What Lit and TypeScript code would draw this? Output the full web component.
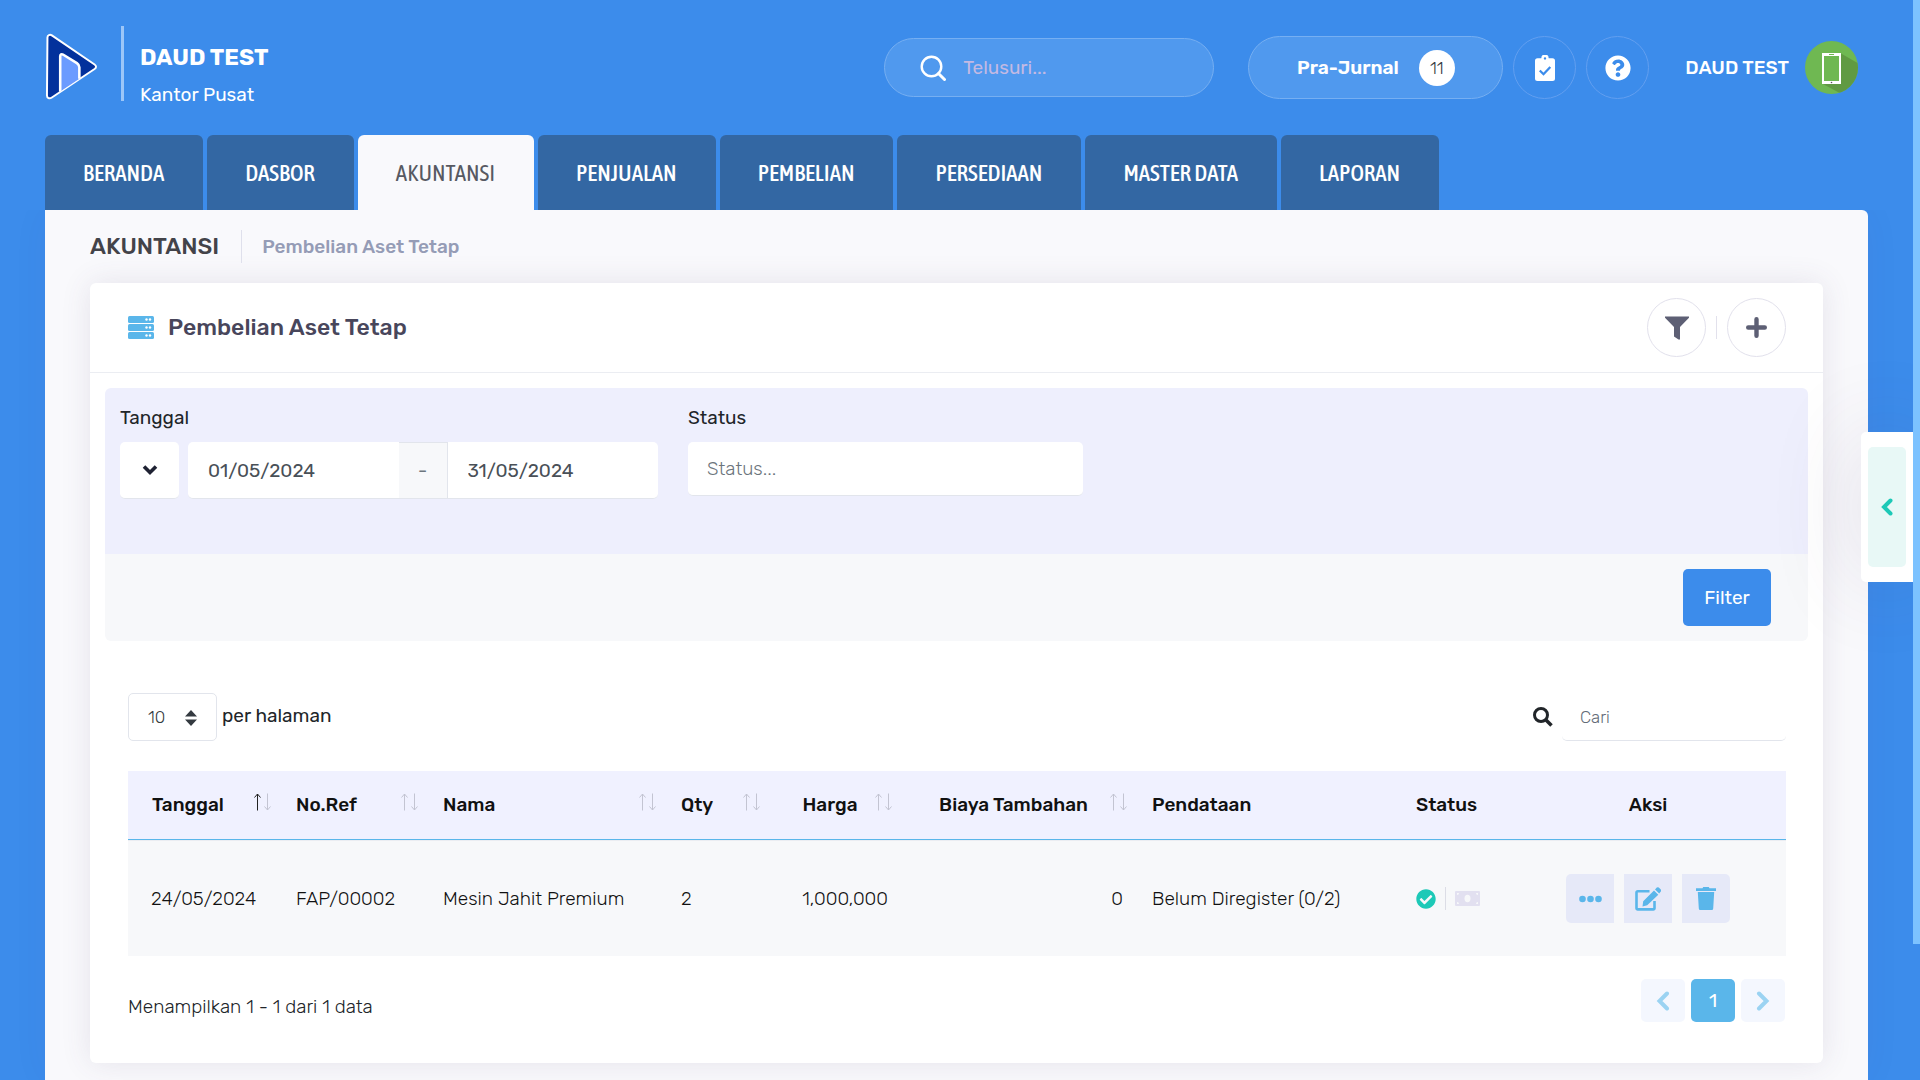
import { LitElement, html, svg, css } from "lit";
import { customElement, state } from "lit/decorators.js";
import { classMap } from "lit/directives/class-map.js";

const logo = html`<svg class="logo" width="53" height="67" viewBox="0 0 54 68" aria-hidden="true">
  <path d="M2.5 4.5C2.5 2 5 1 7 2.3L50.5 32c2 1.400 2 3.200 0 4.600L7 65.600c-2.500 1.600-5 .6-5-2z" fill="#03319c" stroke="#fff" stroke-width="2" stroke-linejoin="round"/>
  <path d="M15.500 59.500V23.500c0-1.700 1.400-2.500 2.800-1.700L32.500 30.500c1.800 1.200 2.500 2.400 2.500 4.300V46.500z" fill="#6b9bff"/>
  <path d="M15.500 59.500V23.500c0-1.700 1.400-2.500 2.800-1.700L32.500 30.500c1.800 1.200 2.500 2.400 2.500 4.300V46.500" fill="none" stroke="#fff" stroke-width="2.600"/>
</svg>`;

const searchThin = html`<svg width="26" height="26" viewBox="0 0 26 26" fill="none" stroke="#fff" aria-hidden="true">
  <circle cx="11.500" cy="11.500" r="9.800" stroke-width="2.400"/><path d="M18.500 18.500l6 6" stroke-width="3" stroke-linecap="round"/>
</svg>`;

const searchBold = html`<svg width="20" height="20" viewBox="0 0 20 20" fill="none" stroke="#212529" stroke-width="3" aria-hidden="true">
  <circle cx="8" cy="8" r="6.500"/><path d="M13 13l5.500 5.500" stroke-width="3.600"/>
</svg>`;

const clipboard = html`<svg width="20" height="26" viewBox="0 0 20 26" aria-hidden="true">
  <path fill="#fff" fill-rule="evenodd" d="M2.500 3.200H6.300a3.700 3.700 0 0 1 7.400 0h3.800A2.500 2.500 0 0 1 20 5.700v17.800a2.500 2.500 0 0 1-2.500 2.500h-15A2.500 2.500 0 0 1 0 23.500V5.700a2.500 2.500 0 0 1 2.500-2.500zM10 2.200a1.200 1.200 0 1 0 0 2.400 1.200 1.200 0 0 0 0-2.400z"/>
  <path d="M4.800 15.500l3.700 3.700 6.800-7.200" fill="none" stroke="#3c8ceb" stroke-width="2.300"/>
</svg>`;

const question = html`<svg width="26" height="26" viewBox="0 0 512 512" fill="#fff" aria-hidden="true"><path d="M504 256c0 136.997-111.043 248-248 248S8 392.997 8 256C8 119.083 119.043 8 256 8s248 111.083 248 248zM262.655 90c-54.497 0-89.255 22.957-116.549 63.758-3.536 5.286-2.353 12.415 2.715 16.258l34.699 26.310c5.205 3.947 12.621 3.008 16.665-2.122 17.864-22.658 30.113-35.797 57.303-35.797 20.429 0 45.698 13.148 45.698 32.958 0 14.976-12.363 22.667-32.534 33.976C247.128 238.528 216 254.941 216 296v4c0 6.627 5.373 12 12 12h56c6.627 0 12-5.373 12-12v-1.333c0-28.462 83.186-29.647 83.186-106.667 0-58.002-60.165-102-116.531-102zM256 338c-25.365 0-46 20.635-46 46 0 25.364 20.635 46 46 46s46-20.636 46-46c0-25.365-20.635-46-46-46z"/></svg>`;

const avatar = html`<svg width="53" height="53" viewBox="0 0 53 53" aria-hidden="true">
  <defs><clipPath id="round"><circle cx="26.500" cy="26.500" r="26.500"/></clipPath></defs>
  <g clip-path="url(#round)">
    <rect width="53" height="53" fill="#6fb852"/>
    <path d="M36 12.500L58 25v32H44L18 43z" fill="#609a42"/>
    <rect x="17" y="12" width="19" height="31" fill="#fff"/>
    <rect x="19" y="15" width="15" height="25" fill="#6fb852"/>
    <rect x="24" y="13" width="5" height="1" fill="#6fb852"/>
    <circle cx="26.500" cy="41.500" r=".8" fill="#555"/>
  </g>
</svg>`;

const server = html`<svg width="26" height="23" viewBox="0 0 26 23" aria-hidden="true">
  ${[0, 8, 16].map(y => svg`<rect x="0" y=${y} width="26" height="7" rx="1.500" fill="#5ab6ea"/><circle cx="18.500" cy=${y + 3.5} r="1.200" fill="#fff"/><circle cx="22" cy=${y + 3.5} r="1.200" fill="#fff"/>`)}
</svg>`;

const funnel = html`<svg width="24" height="24" viewBox="0 0 24 24" aria-hidden="true"><path fill="#5d5f74" d="M0 .5h24v1.200L15 11v12.500h-1.500L9 20.500V11L0 1.700z"/></svg>`;
const plus = html`<svg width="21" height="21" viewBox="0 0 21 21" aria-hidden="true"><path stroke="#5d5f74" stroke-width="4.400" stroke-linecap="round" d="M10.500 2.200v16.600M2.200 10.500h16.600"/></svg>`;
const chevDown = html`<svg width="16" height="12" viewBox="0 0 16 12" aria-hidden="true"><path d="M2 2.500l6 6 6-6" fill="none" stroke="#1f2233" stroke-width="3.600"/></svg>`;
const chevLeft = html`<svg width="12" height="18" viewBox="0 0 12 18" aria-hidden="true"><path d="M9.500 2.500L3 9l6.500 6.500" fill="none" stroke="#1dc9b7" stroke-width="4" stroke-linecap="round"/></svg>`;
const pageLeft = html`<svg width="14" height="20" viewBox="0 0 14 20" aria-hidden="true"><path d="M11 2.500L3.500 10l7.500 7.500" fill="none" stroke="#9bd3f2" stroke-width="4" stroke-linecap="round"/></svg>`;
const pageRight = html`<svg width="14" height="20" viewBox="0 0 14 20" aria-hidden="true"><path d="M3 2.500l7.500 7.500-7.500 7.500" fill="none" stroke="#9bd3f2" stroke-width="4" stroke-linecap="round"/></svg>`;
const updown = html`<svg class="updown" width="12" height="16" viewBox="0 0 12 16" fill="#343a40" aria-hidden="true"><path d="M6 0l6 6.500H0zM6 16L0 9.500h12z"/></svg>`;
const check = html`<svg width="20" height="20" viewBox="0 0 512 512" role="img" aria-label="Disetujui"><path fill="#1dc9b7" d="M504 256c0 136.967-111.033 248-248 248S8 392.967 8 256 119.033 8 256 8s248 111.033 248 248zM227.314 387.314l184-184c6.248-6.248 6.248-16.379 0-22.627l-22.627-22.627c-6.248-6.249-16.379-6.249-22.628 0L216 308.118l-70.059-70.059c-6.248-6.248-16.379-6.248-22.628 0l-22.627 22.627c-6.248 6.248-6.248 16.379 0 22.627l104 104c6.249 6.249 16.379 6.249 22.628.001z"/></svg>`;
const money = html`<svg width="25" height="15" viewBox="0 0 25 15" role="img" aria-label="Pembayaran"><rect width="25" height="15" rx="1" fill="#e2e0f0"/><ellipse cx="12.500" cy="7.500" rx="3" ry="3.700" fill="#f7f8fa"/><path fill="#f7f8fa" d="M2 2h2a2 2 0 0 1-2 2zM23 2v2a2 2 0 0 1-2-2zM2 13v-2a2 2 0 0 1 2 2zM23 13h-2a2 2 0 0 1 2-2z"/></svg>`;
const dots = html`<svg width="23" height="8" viewBox="0 0 23 8" fill="#5ab6ea" aria-hidden="true"><circle cx="3.500" cy="4" r="3.300"/><circle cx="11.500" cy="4" r="3.300"/><circle cx="19.500" cy="4" r="3.300"/></svg>`;
const edit = html`<svg width="26" height="24" viewBox="0 0 26 24" aria-hidden="true">
  <path d="M14.500 4.200H2.700a1.200 1.200 0 0 0-1.200 1.200v15.800a1.200 1.200 0 0 0 1.200 1.200h15.600a1.200 1.200 0 0 0 1.200-1.200V14" fill="none" stroke="#5ab6ea" stroke-width="2.600"/>
  <path d="M19 3.400l4.300 4.300L12.200 18.300 7.500 19.500l.7-5.200zM20 2.400l1.800-1.800a1.500 1.500 0 0 1 2 0l2 2a1.500 1.500 0 0 1 0 2L24.200 6.500z" fill="#5ab6ea"/>
</svg>`;
const trash = html`<svg width="20" height="23" viewBox="0 0 20 23" fill="#5ab6ea" aria-hidden="true"><path d="M6.500 1.200L7.200 0h5.600l.7 1.200H20V4H0V1.200zM1.800 5h16.400l-1 16.500a1.500 1.500 0 0 1-1.500 1.500H4.300a1.500 1.500 0 0 1-1.500-1.500z"/></svg>`;

const sortIcon = (active: boolean) => html`<svg width="17" height="18" viewBox="0 0 17 18" fill="none" aria-hidden="true">
  <g stroke=${active ? "#222" : "#c3c4d2"}><path d="M3.500 17.500V1"/><path d="M.5 4.500l3-3.500 3 3.500"/></g>
  <g stroke="#c3c4d2"><path d="M13.500 .5V17"/><path d="M10.500 13.500l3 3.500 3-3.500"/></g>
</svg>`;

const tabs = ["BERANDA", "DASBOR", "AKUNTANSI", "PENJUALAN", "PEMBELIAN", "PERSEDIAAN", "MASTER DATA", "LAPORAN"];

const columns = [
  { name: "Tanggal", cls: "first", sort: true },
  { name: "No.Ref", cls: "", sort: true },
  { name: "Nama", cls: "", sort: true },
  { name: "Qty", cls: "", sort: true },
  { name: "Harga", cls: "mid", sort: true },
  { name: "Biaya Tambahan", cls: "mid", sort: true },
  { name: "Pendataan", cls: "", sort: false },
  { name: "Status", cls: "", sort: false },
  { name: "Aksi", cls: "center", sort: false },
];

const rows = [
  { date: "24/05/2024", ref: "FAP/00002", name: "Mesin Jahit Premium", qty: "2", price: "1,000,000", extra: "0", reg: "Belum Diregister (0/2)" },
];

@customElement("app-root")
export class AppRoot extends LitElement {
  @state() private active = "AKUNTANSI";

  static styles = css`
    :host {
      display: grid;
      grid-template-columns: minmax(0, 1fr) 7px;
      min-height: 100vh;
      position: relative;
      background: #3c8ceb;
      font-family: Rubik, Roboto, sans-serif;
      font-size: 19px;
      line-height: 29px;
      color: #212529;
    }
    * { box-sizing: border-box; }
    button, input, select { font: inherit; color: inherit; margin: 0; border: 0; }
    button { cursor: pointer; padding: 0; display: flex; align-items: center; justify-content: center; }
    svg { display: block; flex: none; }
    a { text-decoration: none; color: inherit; }
    h1, h2, p { margin: 0; font-weight: 500; }

    .page { display: flex; flex-direction: column; min-width: 0; }
    .rail-thumb { height: 87.4vh; background: #7cc2ff; }

    .top { height: 135px; display: flex; align-items: center; padding: 0 55px 0 45px; color: #fff; }
    .brand { display: flex; align-items: center; margin-right: auto; }
    .logo { margin-bottom: 3px; }
    .rule { width: 3px; height: 75px; margin: 0 16px 8px 23px; background: #9cc6f8; }
    .brand-text { padding-top: 17px; line-height: 37px; }
    .brand-text h1 { font-size: 23px; font-weight: 700; }
    .search { width: 330px; height: 59px; border: 1px solid #76aff2; border-radius: 30px; background: #5099ee; display: flex; align-items: center; gap: 17px; padding: 0 35px; }
    .search input { flex: 1; min-width: 0; background: none; padding: 0; outline: 0; }
    .search input::placeholder { color: #c3b9e3; opacity: 1; }
    .journal { height: 63px; width: 255px; margin-left: 34px; border: 1px solid #76aff2; border-radius: 32px; background: #5099ee; gap: 20px; font-weight: 600; }
    .badge { width: 36px; height: 36px; border-radius: 50%; background: #fff; color: #343a40; font-size: 17px; font-weight: 300; line-height: 36px; }
    .round { width: 63px; height: 63px; border-radius: 50%; border: 1px solid #629ff0; background: none; margin-left: 10px; }
    .user { display: flex; align-items: center; gap: 16px; margin-left: 36px; font-weight: 500; background: none; }

    .tabs { display: flex; gap: 4px; padding: 0 45px; font-family: "Asap Condensed", "Roboto Condensed", sans-serif; font-size: 23px; }
    .tab { height: 75px; padding: 2px 39px 0 38px; display: flex; align-items: center; background: #3367a3; color: #fff; border-radius: 6px 6px 0 0; font-weight: 500; }
    .tab.on { background: #f9f9fc; color: #575962; font-weight: 400; }

    .panel { flex: 1; margin: 0 45px; padding: 0 45px 17px; background: #f9f9fc; border-radius: 0 6px 0 0; box-shadow: 0 0 40px rgba(82, 63, 105, 0.04); clip-path: inset(0 -45px 0 -45px); }
    .crumbs { height: 73px; display: flex; align-items: center; }
    .crumbs h1 { font-size: 23px; color: #434349; }
    .crumbs a { font-weight: 500; color: #959cb6; }
    .crumb-rule { width: 1px; height: 33px; background: #dfe0ec; margin: 0 20px 0 22px; }

    .card { background: #fff; border-radius: 6px; box-shadow: 0 0 30px rgba(82, 63, 105, 0.12); }
    .card-head { height: 90px; padding: 0 37px 0 38px; border-bottom: 1px solid #ebedf2; display: flex; align-items: center; gap: 14px; }
    .card-head h2 { font-size: 23px; color: #48465b; margin-right: auto; }
    .tool { width: 59px; height: 59px; border-radius: 50%; background: #fff; border: 1px solid #e2e1ec; }
    .head-tools { display: flex; align-items: center; gap: 10px; }
    .tool-rule { width: 1px; height: 23px; background: #e2e1ec; }
    .card-body { padding: 15px 15px 41px; }

    .filter-top { height: 166px; padding: 15px; background: #eeeffd; border-radius: 6px 6px 0 0; display: flex; gap: 30px; }
    .field { border: 0; margin: 0; padding: 0; min-width: 0; }
    .field legend, .field label { display: block; height: 39px; padding: 0; }
    .dates { display: flex; width: 538px; }
    .dates button { width: 59px; height: 57px; margin-right: 9px; background: #fff; border-radius: 5px; border-bottom: 1px solid #e2e5ec; }
    .dates input { flex: 1; min-width: 0; height: 57px; padding: 0 20px; background: #fff; border-bottom: 1px solid #e2e5ec; color: #495057; }
    .dates .from { border-radius: 5px 0 0 5px; }
    .dates .to { border-radius: 0 5px 5px 0; }
    .dash { width: 49px; height: 57px; background: #f7f8fa; border: 1px solid #e2e5ec; border-left: 0; display: flex; align-items: center; justify-content: center; color: #6c757d; }
    .status { width: 395px; height: 54px; padding: 0 19px; background: #fff; border-radius: 5px; border-bottom: 1px solid #e2e5ec; font-weight: 300; }
    .status::placeholder { color: #6c757d; opacity: 1; }
    .filter-foot { padding: 15px 37px 15px 15px; background: #f7f8fa; display: flex; justify-content: flex-end; border-radius: 0 0 6px 6px; }
    .apply { width: 88px; height: 57px; background: #3c8ceb; color: #fff; border-radius: 5px; }

    .list { padding: 52px 22px 0 23px; }
    .controls { display: flex; align-items: center; margin-bottom: 30px; }
    .controls > label:not(.find) { padding-bottom: 4px; }
    .length { position: relative; width: 89px; margin-right: 5px; }
    .length select { width: 100%; height: 48px; padding: 0 19px; appearance: none; background: #fff; border: 1px solid #e2e5ec; border-radius: 5px; font-size: 17px; font-weight: 300; color: #343a40; }
    .updown { position: absolute; right: 20px; top: 17px; pointer-events: none; }
    .find { margin-left: auto; display: flex; align-items: center; gap: 9px; }
    .find input { width: 224px; height: 48px; padding: 0 18px; font-size: 17px; font-weight: 300; border-bottom: 1px solid #e2e5ec; border-radius: 5px; background: none; }
    .find input::placeholder { color: #646c78; opacity: 1; }

    table { width: 100%; table-layout: fixed; border-collapse: separate; border-spacing: 0; }
    .c0 { width: 149px; } .c1 { width: 147px; } .c2 { width: 238px; } .c3 { width: 104px; } .c4 { width: 132px; }
    .c5 { width: 235px; } .c6 { width: 264px; } .c7 { width: 113px; } .c8 { width: 276px; }
    th { height: 69px; padding: 0 6px 2px 19px; background: #f0f1ff; border-bottom: 1px solid #5ab6ea; text-align: left; font-weight: 500; color: #111; white-space: nowrap; }
    .th-in { display: flex; align-items: center; justify-content: space-between; }
    .sort { background: none; padding-bottom: 4px; }
    td { height: 116px; padding: 0 10px 0 19px; background: #f7f8fa; border-top: 1px solid #ebedf2; font-weight: 300; color: #111; white-space: nowrap; }
    th.first { padding-left: 24px; }
    td.first { padding-left: 23px; }
    th.mid span { flex: 1; text-align: center; }
    th.center { text-align: center; padding: 0 0 2px; }
    td.num { text-align: right; }
    td.acts { padding: 0; }
    .flags { display: flex; align-items: center; gap: 9px; }
    .flag-rule { width: 1px; height: 23px; background: #dcdde6; }
    .actions { display: flex; justify-content: center; gap: 10px; }
    .act { width: 48px; height: 49px; background: #e6e9f8; }
    .act:first-child { border-radius: 5px 0 0 5px; }
    .act:last-child { border-radius: 0 5px 5px 0; }

    .foot { display: flex; justify-content: space-between; padding: 23px 1px 0 0; }
    .info { font-weight: 300; padding-top: 13px; }
    .pages { display: flex; gap: 6px; }
    .pages button { width: 44px; height: 43px; border-radius: 5px; background: #f4f7fe; }
    .pages .current { background: #5ab6ea; color: #fff; font-weight: 400; }

    .drawer { position: absolute; right: 7px; top: 432px; width: 52px; height: 150px; padding: 15px 7px; background: #fff; border-radius: 5px 0 0 5px; box-shadow: 0 0 90px rgba(82, 63, 105, 0.16); clip-path: inset(-100px 0 -100px -100px); }
    .drawer button { width: 100%; height: 100%; background: #e8f8f6; border-radius: 5px; }
  `;

  private renderTop() {
    return html`<header class="top">
      <div class="brand">
        ${logo}
        <div class="rule"></div>
        <div class="brand-text"><h1>DAUD TEST</h1><div>Kantor Pusat</div></div>
      </div>
      <label class="search">${searchThin}<input type="text" aria-label="Telusuri" placeholder="Telusuri..." /></label>
      <button class="journal">Pra-Jurnal <span class="badge">11</span></button>
      <button class="round" aria-label="Tugas">${clipboard}</button>
      <button class="round" aria-label="Bantuan">${question}</button>
      <button class="user">DAUD TEST ${avatar}</button>
    </header>`;
  }

  private renderFilter() {
    return html`<form @submit=${(e: Event) => e.preventDefault()}>
      <div class="filter-top">
        <fieldset class="field">
          <legend>Tanggal</legend>
          <div class="dates">
            <button type="button" aria-label="Pilih periode">${chevDown}</button>
            <input class="from" type="text" aria-label="Tanggal awal" .value=${"01/05/2024"} />
            <span class="dash">-</span>
            <input class="to" type="text" aria-label="Tanggal akhir" .value=${"31/05/2024"} />
          </div>
        </fieldset>
        <div class="field">
          <label for="status">Status</label>
          <input id="status" class="status" type="text" placeholder="Status..." />
        </div>
      </div>
      <div class="filter-foot"><button class="apply" type="submit">Filter</button></div>
    </form>`;
  }

  private renderTable() {
    return html`<table>
      <colgroup>${columns.map((_, i) => html`<col class="c${i}" />`)}</colgroup>
      <thead><tr>
        ${columns.map((c, i) => html`<th class=${c.cls} scope="col">${c.sort
          ? html`<div class="th-in"><span>${c.name}</span><button class="sort" aria-label="Urutkan ${c.name}">${sortIcon(i === 0)}</button></div>`
          : c.name}</th>`)}
      </tr></thead>
      <tbody>
        ${rows.map(r => html`<tr>
          <td class="first">${r.date}</td><td>${r.ref}</td><td>${r.name}</td><td>${r.qty}</td>
          <td class="num">${r.price}</td><td class="num">${r.extra}</td><td>${r.reg}</td>
          <td><div class="flags">${check}<span class="flag-rule"></span>${money}</div></td>
          <td class="acts"><div class="actions">
            <button class="act" aria-label="Lainnya">${dots}</button>
            <button class="act" aria-label="Ubah">${edit}</button>
            <button class="act" aria-label="Hapus">${trash}</button>
          </div></td>
        </tr>`)}
      </tbody>
    </table>`;
  }

  render() {
    return html`
      <div class="page">
        ${this.renderTop()}
        <nav class="tabs">
          ${tabs.map(t => html`<a href="#" class=${classMap({ tab: true, on: t === this.active })}
            @click=${(e: Event) => { e.preventDefault(); this.active = t; }}>${t}</a>`)}
        </nav>
        <main class="panel">
          <div class="crumbs"><h1>AKUNTANSI</h1><span class="crumb-rule"></span><a href="#">Pembelian Aset Tetap</a></div>
          <section class="card">
            <div class="card-head">
              ${server}<h2>Pembelian Aset Tetap</h2>
              <div class="head-tools">
                <button class="tool" aria-label="Saring">${funnel}</button>
                <span class="tool-rule"></span>
                <button class="tool" aria-label="Tambah">${plus}</button>
              </div>
            </div>
            <div class="card-body">
              ${this.renderFilter()}
              <div class="list">
                <div class="controls">
                  <div class="length"><select id="len" aria-label="Jumlah data"><option>10</option><option>25</option><option>50</option></select>${updown}</div>
                  <label for="len">per halaman</label>
                  <label class="find">${searchBold}<input type="text" aria-label="Cari" placeholder="Cari" /></label>
                </div>
                ${this.renderTable()}
                <div class="foot">
                  <p class="info">Menampilkan 1 - 1 dari 1 data</p>
                  <div class="pages">
                    <button aria-label="Sebelumnya">${pageLeft}</button>
                    <button class="current">1</button>
                    <button aria-label="Berikutnya">${pageRight}</button>
                  </div>
                </div>
              </div>
            </div>
          </section>
        </main>
      </div>
      <div class="rail"><div class="rail-thumb"></div></div>
      <aside class="drawer"><button aria-label="Buka panel">${chevLeft}</button></aside>
    `;
  }
}
